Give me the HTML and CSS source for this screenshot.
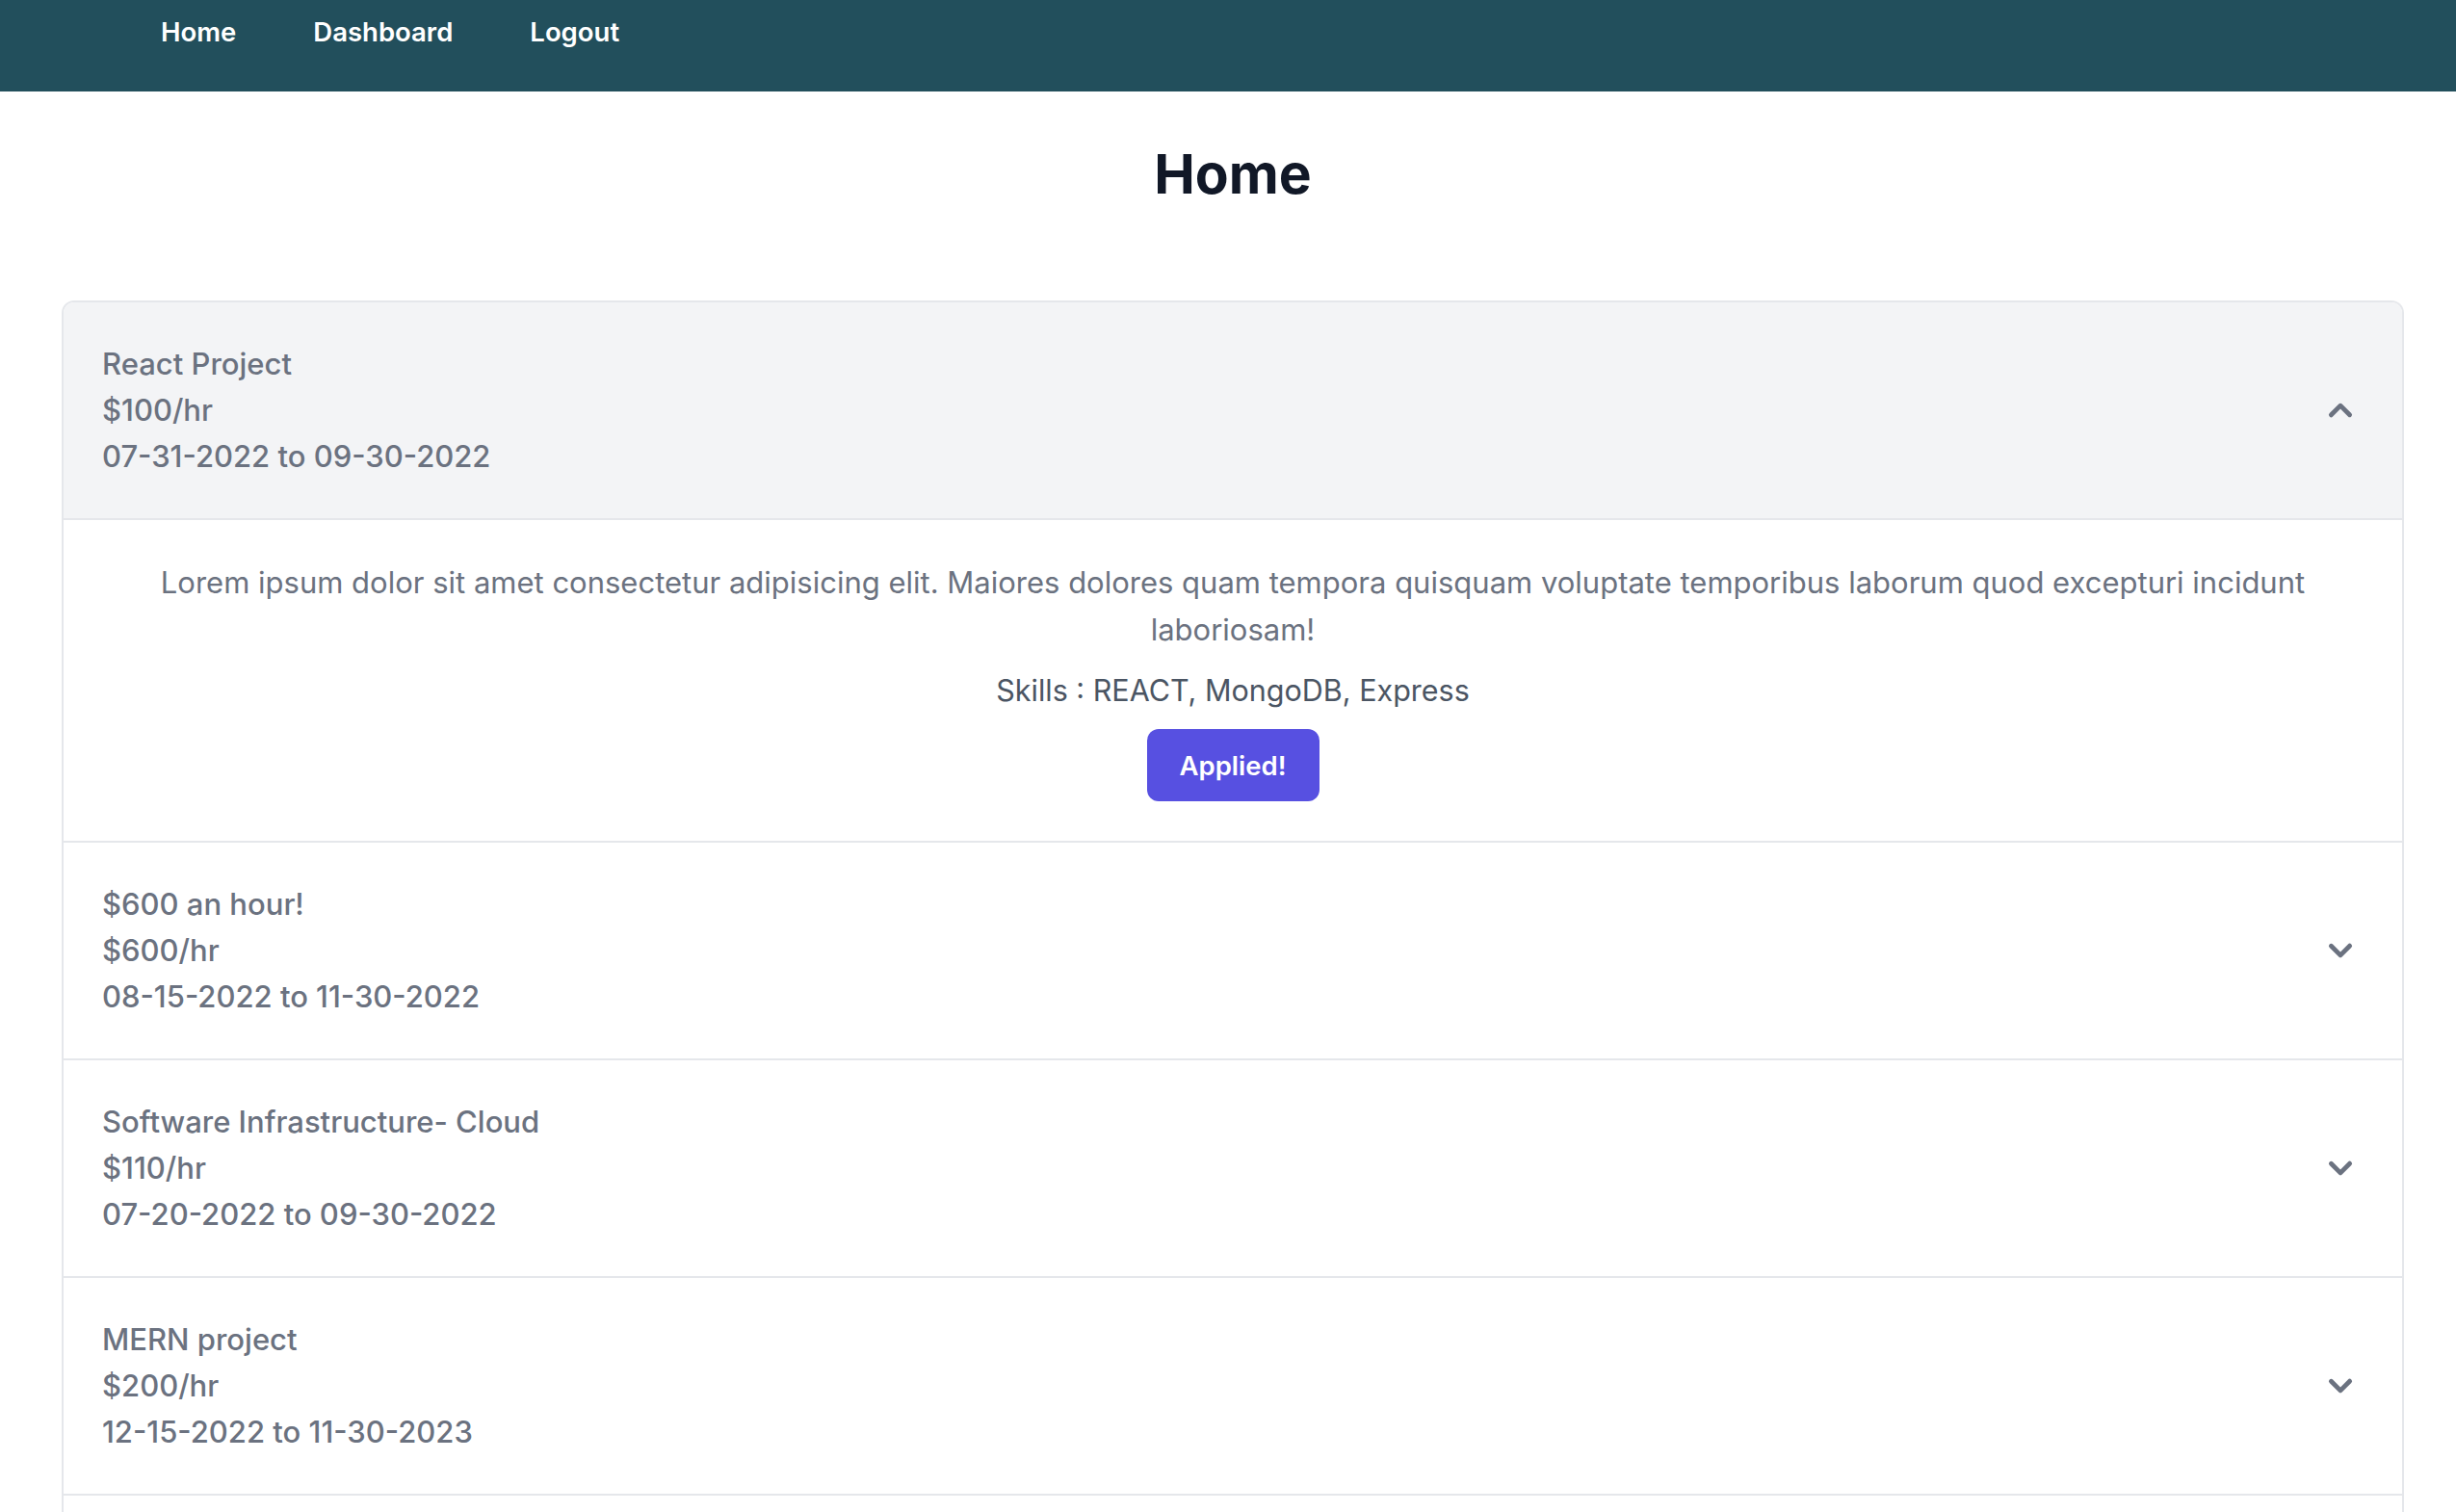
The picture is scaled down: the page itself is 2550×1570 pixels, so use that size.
FILE: index.html
```html
<!DOCTYPE html>
<html lang="en">
<head>
<meta charset="utf-8">
<title>Home</title>
<link rel="stylesheet" href="styles.css">
</head>
<body>
<nav class="topbar">
  <ul class="nav-links">
    <li><a href="#">Home</a></li>
    <li><a href="#">Dashboard</a></li>
    <li><a href="#">Logout</a></li>
  </ul>
</nav>
<main class="content">
  <h1 class="page-title">Home</h1>
  <div class="accordion">
    <div class="item">
      <button class="item-header open">
        <span class="item-info">
          <span>React Project</span>
          <span>$100/hr</span>
          <span>07-31-2022 to 09-30-2022</span>
        </span>
        <svg class="chev up" viewBox="0 0 20 20" fill="currentColor"><path fill-rule="evenodd" d="M5.293 7.293a1 1 0 011.414 0L10 10.586l3.293-3.293a1 1 0 111.414 1.414l-4 4a1 1 0 01-1.414 0l-4-4a1 1 0 010-1.414z" clip-rule="evenodd"/></svg>
      </button>
      <div class="item-body">
        <p class="desc">Lorem ipsum dolor sit amet consectetur adipisicing elit. Maiores dolores quam tempora quisquam voluptate temporibus laborum quod excepturi incidunt laboriosam!</p>
        <p class="skills">Skills : REACT, MongoDB, Express</p>
        <button class="apply-btn">Applied!</button>
      </div>
    </div>
    <div class="item">
      <button class="item-header">
        <span class="item-info">
          <span>$600 an hour!</span>
          <span>$600/hr</span>
          <span>08-15-2022 to 11-30-2022</span>
        </span>
        <svg class="chev" viewBox="0 0 20 20" fill="currentColor"><path fill-rule="evenodd" d="M5.293 7.293a1 1 0 011.414 0L10 10.586l3.293-3.293a1 1 0 111.414 1.414l-4 4a1 1 0 01-1.414 0l-4-4a1 1 0 010-1.414z" clip-rule="evenodd"/></svg>
      </button>
    </div>
    <div class="item">
      <button class="item-header">
        <span class="item-info">
          <span>Software Infrastructure- Cloud</span>
          <span>$110/hr</span>
          <span>07-20-2022 to 09-30-2022</span>
        </span>
        <svg class="chev" viewBox="0 0 20 20" fill="currentColor"><path fill-rule="evenodd" d="M5.293 7.293a1 1 0 011.414 0L10 10.586l3.293-3.293a1 1 0 111.414 1.414l-4 4a1 1 0 01-1.414 0l-4-4a1 1 0 010-1.414z" clip-rule="evenodd"/></svg>
      </button>
    </div>
    <div class="item">
      <button class="item-header">
        <span class="item-info">
          <span>MERN project</span>
          <span>$200/hr</span>
          <span>12-15-2022 to 11-30-2023</span>
        </span>
        <svg class="chev" viewBox="0 0 20 20" fill="currentColor"><path fill-rule="evenodd" d="M5.293 7.293a1 1 0 011.414 0L10 10.586l3.293-3.293a1 1 0 111.414 1.414l-4 4a1 1 0 01-1.414 0l-4-4a1 1 0 010-1.414z" clip-rule="evenodd"/></svg>
      </button>
    </div>
    <div class="item item-partial">
      <button class="item-header">
        <span class="item-info"></span>
        <svg class="chev" viewBox="0 0 20 20" fill="currentColor"><path fill-rule="evenodd" d="M5.293 7.293a1 1 0 011.414 0L10 10.586l3.293-3.293a1 1 0 111.414 1.414l-4 4a1 1 0 01-1.414 0l-4-4a1 1 0 010-1.414z" clip-rule="evenodd"/></svg>
      </button>
    </div>
  </div>
</main>
</body>
</html>
```
FILE: styles.css
```css
* { box-sizing: border-box; }
html, body { margin: 0; padding: 0; }
body {
  font-family: Inter, "Noto Sans", "Liberation Sans", sans-serif;
  background: #ffffff;
  color: #111827;
  overflow: hidden;
}
.topbar {
  height: 95px;
  background: #224f5c;
}
.nav-links {
  list-style: none;
  margin: 0;
  padding: 13px 0 0 167px;
  display: flex;
  gap: 80px;
}
.nav-links a {
  color: #ffffff;
  text-decoration: none;
  font-size: 27.5px;
  font-weight: 600;
  line-height: 40px;
}
.content {
  padding: 0 54px 0 64px;
}
.page-title {
  margin: 50px 0 0;
  text-align: center;
  font-size: 57px;
  line-height: 72px;
  font-weight: 700;
  color: #111827;
}
.accordion {
  margin-top: 95px;
  border: 2px solid #e5e7eb;
  border-bottom: none;
  border-radius: 13px 13px 0 0;
  overflow: hidden;
}
.item-header {
  display: flex;
  width: 100%;
  align-items: center;
  justify-content: space-between;
  padding: 40px;
  border: none;
  border-bottom: 2px solid #e5e7eb;
  background: #ffffff;
  font-family: inherit;
  text-align: left;
  color: #6b7280;
  cursor: pointer;
}
.item-header.open { background: #f3f4f6; }
.item-partial .item-header { height: 226px; }
.item-info {
  display: flex;
  flex-direction: column;
  font-size: 31px;
  line-height: 48px;
  font-weight: 500;
  color: #6b7280;
}
.chev {
  width: 48px;
  height: 48px;
  flex-shrink: 0;
  color: #6b7280;
}
.chev.up { transform: rotate(180deg); }
.item-body {
  padding: 40px 40px 41px;
  border-bottom: 2px solid #e5e7eb;
  text-align: center;
}
.desc {
  margin: 0;
  font-size: 31px;
  line-height: 49px;
  color: #6b7280;
}
.skills {
  margin: 15px 0 0;
  font-size: 30.5px;
  line-height: 48px;
  color: #4b5563;
}
.apply-btn {
  margin-top: 16px;
  width: 179px;
  height: 75px;
  border: none;
  border-radius: 12px;
  background: #5750e1;
  color: #ffffff;
  font-family: inherit;
  font-size: 27.5px;
  font-weight: 600;
  cursor: pointer;
}
```
